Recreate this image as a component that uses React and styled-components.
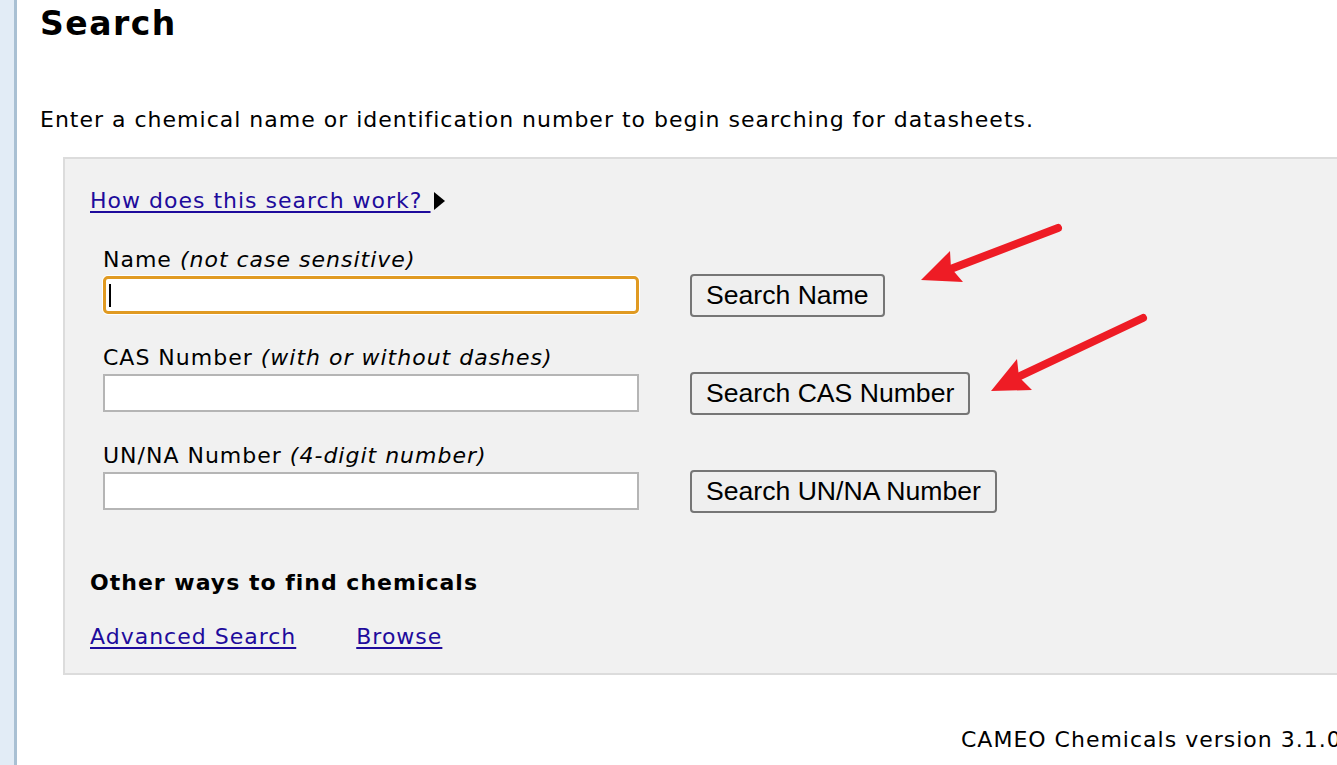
import React from 'react';
import styled, { createGlobalStyle } from 'styled-components';

const GlobalStyle = createGlobalStyle`
  html, body {
    margin: 0;
    padding: 0;
    background: #ffffff;
    overflow: hidden;
  }
  body {
    font-family: "DejaVu Sans", Verdana, sans-serif;
    font-size: 22px;
    letter-spacing: 1px;
    color: #000;
  }
`;

const Page = styled.div`
  position: relative;
  display: flex;
  min-height: 100vh;
  width: 1500px;
`;

const Sidebar = styled.div`
  width: 14px;
  flex-shrink: 0;
  background: #e2ecf6;
  border-right: 3px solid #a9c0d3;
`;

const Main = styled.main`
  flex: 1;
  padding-left: 23px;
  display: flex;
  flex-direction: column;
`;

const Title = styled.h1`
  margin: 4px 0 0;
  font-size: 33px;
  line-height: 40px;
  letter-spacing: 1.5px;
  font-weight: bold;
`;

const Intro = styled.p`
  margin: 62px 0 0;
  line-height: 28px;
`;

const Panel = styled.section`
  margin: 23px 0 0 23px;
  background: #f1f1f1;
  border: 2px solid #dcdcdc;
  padding: 28px 25px 22px;
  display: flex;
  flex-direction: column;
`;

const Link = styled.a`
  color: #1e0b9c;
  text-decoration: underline;
  text-underline-offset: 3px;
  line-height: 28px;
  cursor: pointer;
`;

const HelpLine = styled.div`
  display: flex;
  align-items: center;
  gap: 2px;
  line-height: 28px;
`;

const Fields = styled.div`
  margin: 31px 0 0 13px;
  display: flex;
  flex-direction: column;
  gap: 30px;
`;

const Field = styled.div`
  display: grid;
  grid-template-columns: 536px auto;
  grid-template-rows: 28px 38px;
  column-gap: 51px;
  row-gap: 2px;
  align-items: center;
  justify-items: start;
`;

const Label = styled.label`
  grid-column: 1 / 3;
  line-height: 28px;
`;

const Hint = styled.em`
  font-style: italic;
`;

const InputWrap = styled.div`
  position: relative;
  width: 536px;
  height: 38px;
`;

const TextInput = styled.input`
  box-sizing: border-box;
  width: 536px;
  height: 38px;
  margin: 0;
  padding: 0 4px;
  font-size: 22px;
  font-family: "DejaVu Sans", sans-serif;
  background: #fff;
  outline: none;
  caret-color: transparent;
  border: ${p => (p.$focused ? '3px solid #e09a22' : '2px solid #b5b5b5')};
  border-radius: ${p => (p.$focused ? '5px' : '0')};
  box-shadow: ${p => (p.$focused ? '0 0 0 1px #ffffff' : 'none')};
`;

const Caret = styled.span`
  position: absolute;
  left: 6px;
  top: 8px;
  width: 2px;
  height: 23px;
  background: #000;
  pointer-events: none;
`;

const Button = styled.button`
  box-sizing: border-box;
  height: 43px;
  margin: -2px 0 -3px;
  padding: 0 14px;
  font-family: "Liberation Sans", Arial, sans-serif;
  font-size: 26.6px;
  letter-spacing: 0;
  color: #000;
  background: #efefef;
  border: 2px solid #767676;
  border-radius: 4px;
  cursor: pointer;
`;

const SubTitle = styled.h2`
  margin: 59px 0 0;
  font-size: 22px;
  line-height: 28px;
  font-weight: bold;
`;

const LinkRow = styled.div`
  margin-top: 26px;
  display: flex;
  gap: 60px;
`;

const Footer = styled.footer`
  margin: 51px 0 0 921px;
  line-height: 28px;
  white-space: nowrap;
`;

const Annotations = styled.svg`
  position: absolute;
  top: 0;
  left: 0;
  pointer-events: none;
`;

const Triangle = () => (
  <svg width="12" height="18" viewBox="0 0 12 18">
    <path d="M1 0 L12 9 L1 18 Z" fill="#000" />
  </svg>
);

const fields = [
  { label: 'Name', hint: 'not case sensitive', button: 'Search Name', focused: true },
  { label: 'CAS Number', hint: 'with or without dashes', button: 'Search CAS Number' },
  { label: 'UN/NA Number', hint: '4-digit number', button: 'Search UN/NA Number' },
];

const App = () => (
  <>
    <GlobalStyle />
    <Page>
      <Sidebar />
      <Main>
        <Title>Search</Title>
        <Intro>Enter a chemical name or identification number to begin searching for datasheets.</Intro>
        <Panel>
          <HelpLine>
            <Link>How does this search work?&nbsp;</Link>
            <Triangle />
          </HelpLine>
          <Fields>
            {fields.map(f => (
              <Field key={f.label}>
                <Label>
                  {f.label} <Hint>({f.hint})</Hint>
                </Label>
                <InputWrap>
                  <TextInput type="text" $focused={f.focused} />
                  {f.focused && <Caret />}
                </InputWrap>
                <Button type="button">{f.button}</Button>
              </Field>
            ))}
          </Fields>
          <SubTitle>Other ways to find chemicals</SubTitle>
          <LinkRow>
            <Link>Advanced Search</Link>
            <Link>Browse</Link>
          </LinkRow>
        </Panel>
        <Footer>CAMEO Chemicals version 3.1.0</Footer>
      </Main>
      <Annotations width="1337" height="765" viewBox="0 0 1337 765">
        <line x1="1058" y1="228" x2="948" y2="270" stroke="#ee1c25" strokeWidth="8" strokeLinecap="round" />
        <polygon points="921,280 950,251 951,268 963,282" fill="#ee1c25" />
        <line x1="1143" y1="318" x2="1016" y2="378" stroke="#ee1c25" strokeWidth="8" strokeLinecap="round" />
        <polygon points="991,391 1017,359 1019,377 1032,390" fill="#ee1c25" />
      </Annotations>
    </Page>
  </>
);

export default App;
